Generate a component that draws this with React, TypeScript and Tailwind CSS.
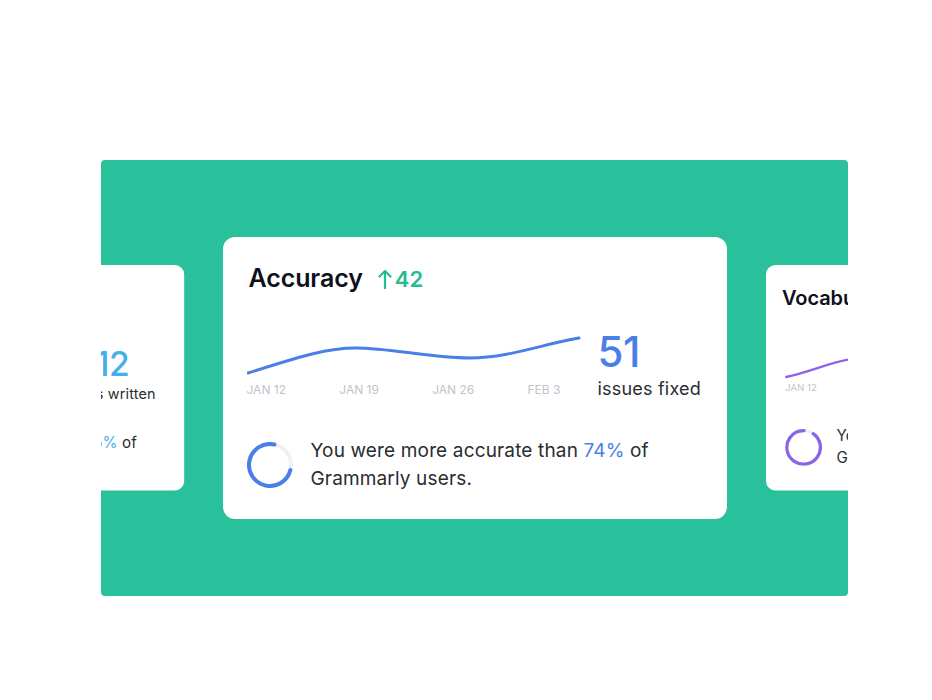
import React from 'react';

interface Metric {
  title: string;
  delta: string;
  color: string;
  number: string;
  label: string;
  line: string;
  pct: number;
  ringStart: number;
  pre: string;
  highlight: string;
  post: string;
  statClass?: string;
  numberClass?: string;
  titleClass?: string;
}

const dates = ['JAN 12', 'JAN 19', 'JAN 26', 'FEB 3'];

function Ring({ pct, color, start }: { pct: number; color: string; start: number }) {
  const r = 21;
  const c = 2 * Math.PI * r;
  return (
    <svg width="46" height="46" viewBox="0 0 46 46" className="shrink-0">
      <circle cx="23" cy="23" r={r} fill="none" stroke="#eef0f3" strokeWidth="4" />
      <circle
        cx="23"
        cy="23"
        r={r}
        fill="none"
        stroke={color}
        strokeWidth="4"
        strokeLinecap="round"
        strokeDasharray={`${c * pct} ${c}`}
        transform={`rotate(${start} 23 23)`}
      />
    </svg>
  );
}

function MetricCard({ m }: { m: Metric }) {
  return (
    <div className="w-[504px] h-[282px] bg-white rounded-xl px-[24px] pt-[26px] flex flex-col">
      <div className={`flex items-center h-8 pl-[2px] ${m.titleClass ?? ''}`}>
        <span className="text-[25px] font-semibold text-[#0e101a] tracking-[-0.1px] whitespace-nowrap">{m.title}</span>
        <span className="ml-[15px] flex items-center gap-[3px] text-[#27bb91] text-[22px] font-semibold">
          <svg width="14" height="20" viewBox="0 0 14 20" fill="none" stroke="currentColor" strokeWidth="2.2" strokeLinecap="round" strokeLinejoin="round">
            <path d="M7 19V2M1.5 7.5L7 2l5.5 5.5" />
          </svg>
          {m.delta}
        </span>
      </div>

      <div className="mt-9 flex items-start">
        <div className="w-[334px] shrink-0">
          <svg width="334" height="50" viewBox="0 0 334 50" fill="none">
            <path d={m.line} stroke={m.color} strokeWidth="3" strokeLinecap="round" />
          </svg>
          <div className="mt-[2px] w-[314px] flex justify-between text-[12px] leading-[14px] text-[#c0c4cc] whitespace-nowrap">
            {dates.map((d) => (
              <span key={d}>{d}</span>
            ))}
          </div>
        </div>
        <div className={`flex flex-col whitespace-nowrap ${m.statClass ?? 'ml-[17px]'}`}>
          <span className={`text-[42px] leading-[42px] font-medium tracking-[-0.5px] ${m.numberClass ?? ''}`} style={{ color: m.color }}>
            {m.number}
          </span>
          <span className="mt-1 text-[18px] leading-6 tracking-[0.2px] text-[#2b2c30]">{m.label}</span>
        </div>
      </div>

      <div className="mt-[36px] flex items-center">
        <Ring pct={m.pct} color={m.color} start={m.ringStart} />
        <p className="ml-[18px] text-[19px] leading-7 tracking-[0.15px] text-[#2b2c30] whitespace-nowrap">
          {m.pre}
          <span style={{ color: m.color }}>{m.highlight}</span>
          {m.post}
          <br />
          Grammarly users.
        </p>
      </div>
    </div>
  );
}

const productivity: Metric = {
  title: 'Productivity',
  delta: '18',
  color: '#46aee8',
  number: '1,412',
  label: 'words written',
  line: 'M1 40 C 60 34, 120 20, 180 22 S 280 14, 332 8',
  pct: 0.55,
  ringStart: -90,
  pre: 'You were more productive than ',
  highlight: '55%',
  post: ' of',
  statClass: '-ml-[8px] pt-[9px]',
  numberClass: '-ml-[12px]',
};

const accuracy: Metric = {
  title: 'Accuracy',
  delta: '42',
  color: '#4b7fe8',
  number: '51',
  label: 'issues fixed',
  line: 'M1 42 C 40 30, 75 17, 109 17 S 185 27, 223 27 S 300 12, 332 7',
  pct: 0.74,
  ringStart: 14,
  pre: 'You were more accurate than ',
  highlight: '74%',
  post: ' of',
};

const vocabulary: Metric = {
  title: 'Vocabulary',
  delta: '11',
  color: '#8c62e8',
  number: '64',
  label: 'unique words',
  line: 'M1 46 C 30 40, 55 28, 80 24 S 200 18, 332 10',
  pct: 0.9,
  ringStart: -55,
  pre: 'You used more unique words than ',
  highlight: '80%',
  post: ' of',
  titleClass: '-ml-[6px]',
};

function SideCard({ m }: { m: Metric }) {
  return (
    <div className="w-[403px] h-[226px] shrink-0">
      <div className="origin-top-left scale-[0.8]">
        <MetricCard m={m} />
      </div>
    </div>
  );
}

export default function App() {
  return (
    <div className="w-[932px] h-[700px] bg-white pt-[160px] pl-[101px] font-['Inter',sans-serif]">
      <div className="w-[747px] h-[436px] bg-[#29c19b] rounded-[4px] overflow-hidden flex items-center justify-center gap-[39px]">
        <SideCard m={productivity} />
        <div className="shrink-0">
          <MetricCard m={accuracy} />
        </div>
        <SideCard m={vocabulary} />
      </div>
    </div>
  );
}
